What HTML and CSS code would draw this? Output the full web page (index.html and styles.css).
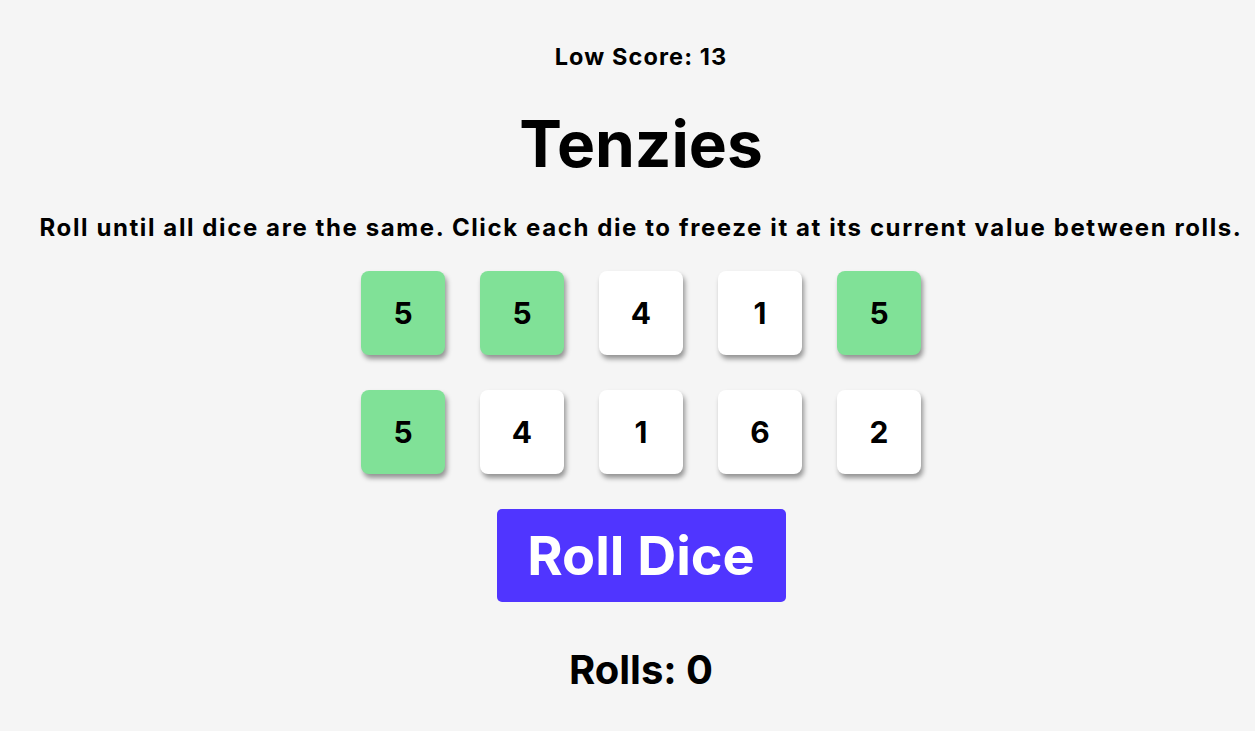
FILE: index.html
```html
<!DOCTYPE html>
<html>
<head>
<meta charset="utf-8">
<link rel="stylesheet" href="styles.css">
</head>
<body>
<main class="game">
  <p class="low-score">Low Score: 13</p>
  <h1 class="title">Tenzies</h1>
  <p class="instructions">Roll until all dice are the same. Click each die to freeze it at its current value between rolls.</p>
  <div class="dice">
    <button class="die held">5</button>
    <button class="die held">5</button>
    <button class="die">4</button>
    <button class="die">1</button>
    <button class="die held">5</button>
    <button class="die held">5</button>
    <button class="die">4</button>
    <button class="die">1</button>
    <button class="die">6</button>
    <button class="die">2</button>
  </div>
  <button class="roll">Roll Dice</button>
  <p class="rolls">Rolls: 0</p>
</main>
</body>
</html>
```
FILE: styles.css
```css
html, body {
  margin: 0;
  padding: 0;
  background: #f5f5f5;
}
body {
  font-family: Inter, "Noto Sans", sans-serif;
  color: #000;
  padding-left: 27px;
}
.game {
  display: flex;
  flex-direction: column;
  align-items: center;
  padding-top: 42px;
}
.low-score {
  margin: 0;
  font-size: 23.5px;
  font-weight: 700;
  line-height: 30px;
  letter-spacing: 1.1px;
}
.title {
  margin: 34px 0 0;
  font-size: 64px;
  font-weight: 700;
  line-height: 76px;
}
.instructions {
  margin: 31px 0 0;
  font-size: 24px;
  font-weight: 700;
  line-height: 30px;
  white-space: nowrap;
  letter-spacing: 1.6px;
}
.dice {
  margin-top: 28px;
  display: grid;
  grid-template-columns: repeat(5, 84px);
  gap: 35px;
}
.die {
  width: 84px;
  height: 84px;
  border: none;
  border-radius: 8px;
  background: #fff;
  box-shadow: 2px 4px 5px rgba(0,0,0,0.4);
  font-family: inherit;
  font-size: 30px;
  font-weight: 700;
  color: #000;
  padding: 0;
}
.die.held {
  background: #80e197;
}
.roll {
  margin-top: 35px;
  width: 289px;
  height: 93px;
  border: none;
  border-radius: 5px;
  background: #5035ff;
  color: #fff;
  font-family: inherit;
  font-size: 54px;
  font-weight: 700;
  padding: 0;
}
.rolls {
  margin: 42px 0 0;
  font-size: 40px;
  font-weight: 700;
  line-height: 52px;
}
```
